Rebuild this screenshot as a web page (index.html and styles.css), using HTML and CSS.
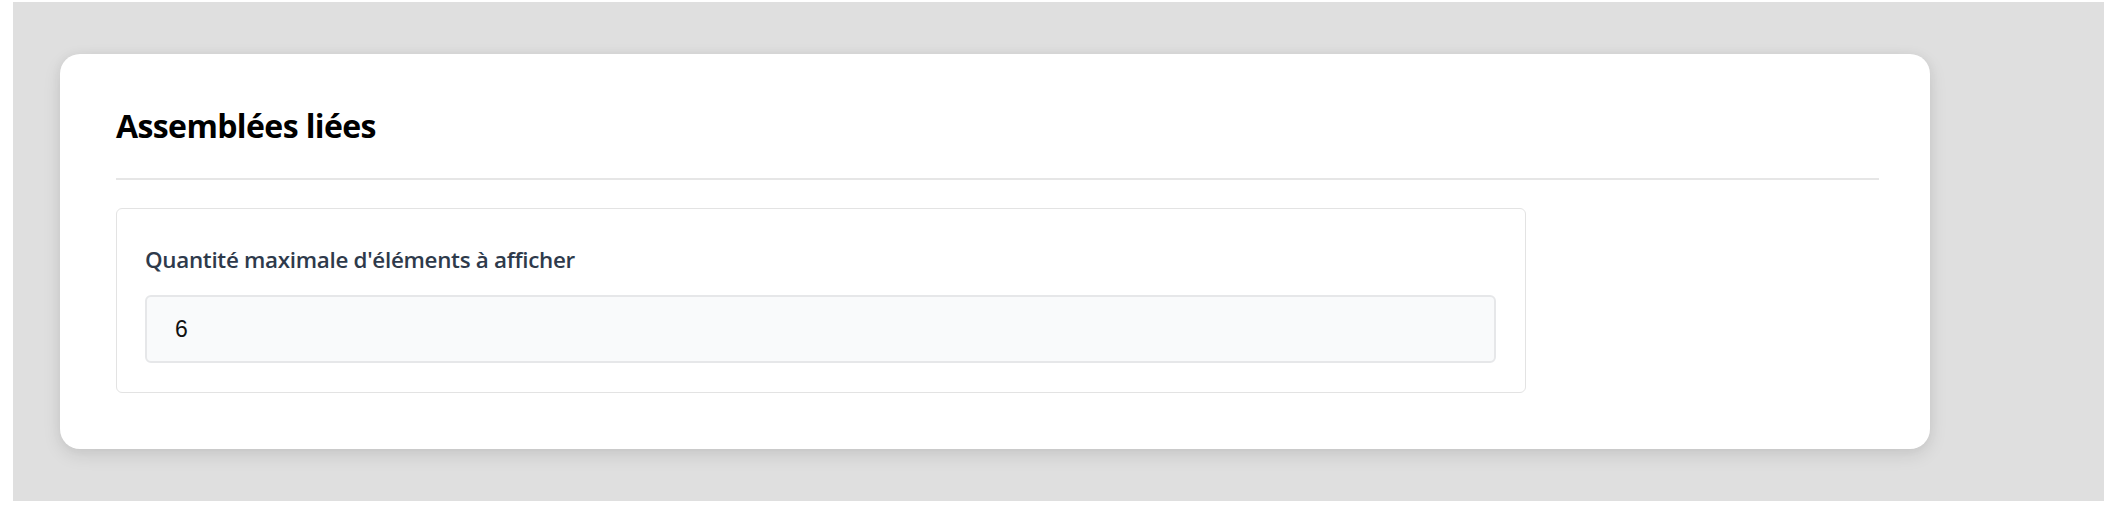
FILE: index.html
```html
<!DOCTYPE html>
<html lang="fr">
<head>
<meta charset="utf-8">
<title>Assemblées liées</title>
<link rel="stylesheet" href="styles.css">
</head>
<body>
<div class="stage">
  <section class="card">
    <h2 class="card-title">Assemblées liées</h2>
    <hr class="divider">
    <div class="field-box">
      <label class="field-label" for="max-items">Quantité maximale d'éléments à afficher</label>
      <div class="input" id="max-items">6</div>
    </div>
  </section>
</div>
</body>
</html>
```

FILE: styles.css
```css
html, body {
  margin: 0;
  padding: 0;
  background: #ffffff;
}

.stage {
  margin: 2px 0 0 13px;
  height: 499px;
  background: #dfdfdf;
  padding: 52px 174px 0 47px;
  box-sizing: border-box;
}

.card {
  background: #ffffff;
  border-radius: 20px;
  box-shadow: 0 6px 18px rgba(0, 0, 0, 0.10), 0 0 12px rgba(0, 0, 0, 0.04);
  height: 395px;
  box-sizing: border-box;
  padding: 52px 51px 0 56px;
}

.card-title {
  margin: 0;
  font-family: "Open Sans", "Noto Sans", sans-serif;
  font-weight: 700;
  font-size: 32px;
  line-height: 40px;
  letter-spacing: -0.6px;
  color: #000000;
}

.divider {
  margin: 32px 0 0 0;
  border: 0;
  height: 2px;
  background: #e6e6e6;
}

.field-box {
  margin-top: 28px;
  width: 80%;
  box-sizing: border-box;
  border: 1px solid #e3e3e3;
  border-radius: 6px;
  padding: 37px 29px 29px 28px;
  font-family: "Open Sans", "Noto Sans", sans-serif;
}

.field-label {
  display: block;
  font-size: 22.4px;
  font-weight: 600;
  line-height: 28px;
  letter-spacing: -0.3px;
  color: #2e3a4b;
}

.input {
  margin-top: 21px;
  height: 68px;
  box-sizing: border-box;
  border: 2px solid #e6e7e9;
  border-radius: 6px;
  background: #f9fafb;
  padding: 0 28px;
  display: flex;
  align-items: center;
  font-family: "Liberation Sans", Arial, sans-serif;
  font-size: 23px;
  color: #111111;
}
```
